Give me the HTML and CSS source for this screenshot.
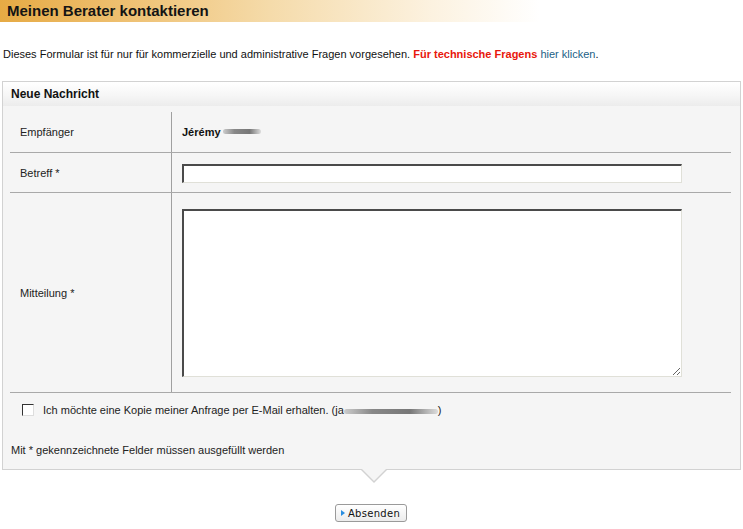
FILE: index.html
```html
<!DOCTYPE html>
<html lang="de">
<head>
<meta charset="utf-8">
<title>Meinen Berater kontaktieren</title>
<link rel="stylesheet" href="styles.css">
</head>
<body>
<div class="title"><h1>Meinen Berater kontaktieren</h1></div>
<p class="intro">Dieses Formular ist für nur für kommerzielle und administrative Fragen vorgesehen. <strong class="warn">Für technische Fragens</strong> <a href="#">hier klicken</a>.</p>
<div class="box">
  <div class="box-head">Neue Nachricht</div>
  <div class="box-body">
    <div class="grid">
      <div class="row row-first">
        <div class="label">Empfänger</div>
        <div class="value"><b>Jérémy</b><span class="blur blur-name"></span></div>
      </div>
      <div class="row row-mid">
        <div class="label">Betreff *</div>
        <div class="value"><input class="field" type="text"></div>
      </div>
      <div class="row row-big">
        <div class="label">Mitteilung *</div>
        <div class="value"><textarea class="area"></textarea></div>
      </div>
    </div>
    <label class="copy"><span class="check"></span><span>Ich möchte eine Kopie meiner Anfrage per E-Mail erhalten. (ja<span class="blur blur-mail"></span>)</span></label>
    <p class="note">Mit * gekennzeichnete Felder müssen ausgefüllt werden</p>
  </div>
  <span class="notch"></span>
</div>
<div class="actions"><button class="btn" type="button"><span class="arrow"></span>Absenden</button></div>
</body>
</html>
```
FILE: styles.css
```css
html, body { margin: 0; padding: 0; background: #fff; }
body { font-family: "Liberation Sans", Arial, sans-serif; font-size: 11px; color: #111; width: 743px; }

.title {
  height: 22px;
  width: 540px;
  background: linear-gradient(to right, #e6aa44 0%, #eebf6f 22%, #f5dbaa 50%, #fcf2e0 80%, #ffffff 100%);
}
.title h1 { margin: 0; padding: 2px 0 0 7px; font-size: 15px; line-height: 18px; font-weight: bold; color: #141414; }

.intro { margin: 25px 0 0 3px; line-height: 14px; }
.warn { color: #e8160c; font-weight: bold; }
.intro a { color: #1d5f86; text-decoration: none; }

.box {
  position: relative;
  margin: 20px 2px 0 2px;
  border: 1px solid #d2d2d2;
  background: #f5f5f5;
}
.box-head {
  height: 24px;
  line-height: 24px;
  padding-left: 8px;
  font-weight: bold;
  font-size: 12px;
  background: linear-gradient(to bottom, #ffffff 0%, #f6f6f6 55%, #ececec 100%);
}
.box-body { padding: 0 9px 13px 7px; }

.grid { display: flex; flex-direction: column; }
.row { display: flex; border-bottom: 1px solid #a9a9a9; }
.label { width: 151px; padding-left: 10px; border-right: 1px solid #a0a0a0; display: flex; align-items: center; color: #222; }
.value { flex: 1; padding-left: 10px; display: flex; align-items: center; }
.row-first { height: 46px; }
.row-first .label { height: 40px; margin-top: 6px; }
.row-first .value { padding-top: 5px; }
.row-mid { height: 39px; }
.row-big { height: 199px; }

.value b { font-size: 11px; }
.blur { display: inline-block; height: 5px; border-radius: 3px; background: linear-gradient(to right, #ccc, #888 30%, #777 70%, #ddd); vertical-align: middle; }
.blur-name { width: 38px; margin-left: 2px; }
.blur-mail { width: 94px; }

.field {
  width: 493px; height: 14px; margin: 1px 0 0 0; padding: 1px 2px;
  border: 1px solid #e0e0d8; border-top: 2px solid #4a4a4a; border-left: 2px solid #4a4a4a;
  background: #fff;
}
.area {
  width: 493px; height: 163px; margin: 1px 0 0 0; padding: 1px 2px;
  border: 1px solid #e0e0d8; border-top: 2px solid #4a4a4a; border-left: 2px solid #4a4a4a;
  background: #fff; resize: both;
}

.copy { display: flex; align-items: center; gap: 9px; margin: 11px 0 0 12px; color: #222; }
.check { width: 10px; height: 10px; border: 1px solid #333; border-right-color: #ddd; border-bottom-color: #ddd; background: #fff; }
.note { margin: 28px 0 0 1px; color: #222; }

.notch {
  position: absolute; left: 357px; bottom: -14px;
  width: 0; height: 0;
  border-left: 14px solid transparent; border-right: 14px solid transparent; border-top: 14px solid #d2d2d2;
}
.notch::after {
  content: ""; position: absolute; left: -13px; top: -15px;
  border-left: 13px solid transparent; border-right: 13px solid transparent; border-top: 13px solid #f5f5f5;
}

.actions { display: flex; justify-content: center; padding: 34px 0 0 0; margin-left: -1px; }
.btn {
  display: flex; align-items: center; gap: 3px;
  height: 18px; padding: 0 6px 0 5px;
  font-family: "DejaVu Sans", Verdana, sans-serif; font-size: 10px; letter-spacing: 0.3px; color: #111;
  border: 1px solid #9a9a9a; border-radius: 3px;
  background: linear-gradient(to bottom, #ffffff, #ececec);
}
.arrow { width: 0; height: 0; border-top: 3px solid transparent; border-bottom: 3px solid transparent; border-left: 4px solid #2a8ee0; }
```
